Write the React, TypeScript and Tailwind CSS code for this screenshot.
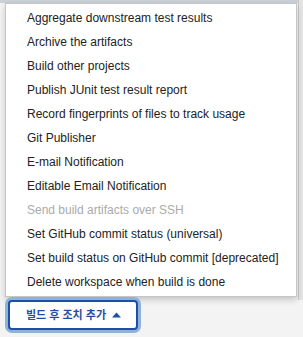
import React from 'react';

const items = [
  { label: 'Aggregate downstream test results' },
  { label: 'Archive the artifacts' },
  { label: 'Build other projects' },
  { label: 'Publish JUnit test result report' },
  { label: 'Record fingerprints of files to track usage' },
  { label: 'Git Publisher' },
  { label: 'E-mail Notification' },
  { label: 'Editable Email Notification' },
  { label: 'Send build artifacts over SSH', disabled: true },
  { label: 'Set GitHub commit status (universal)' },
  { label: 'Set build status on GitHub commit [deprecated]' },
  { label: 'Delete workspace when build is done' },
];

export default function App() {
  return (
    <div
      className="relative w-[303px] h-[337px] overflow-hidden bg-[#f3f3f3] text-[12px] text-[#222]"
      style={{ fontFamily: '"Liberation Sans", Arial, sans-serif' }}
    >
      {/* page content behind the menu */}
      <div className="h-[3px] bg-[#c9d1d8]" />
      <div className="absolute right-0 top-0 h-[300px] w-[5px] bg-[#e4e4e4] border-l border-[#c8c8c8]" />

      <div className="absolute left-[5px] top-[3px] w-[292px] bg-white border border-[#c6c6c6] shadow-[0_3px_6px_rgba(0,0,0,0.18)] py-[2px]">
        {items.map((item, idx) => (
          <div
            key={idx}
            className={
              'h-6 pl-[21px] flex items-center whitespace-nowrap ' +
              (item.disabled ? 'text-[#aaaaaa]' : 'text-[#222]')
            }
          >
            {item.label}
          </div>
        ))}
      </div>

      <div className="absolute left-[8px] top-[300px]">
        <button
          className="h-[30px] pl-[16px] pr-[15px] rounded-[4px] border-2 border-[#1f4ea6] bg-white text-[#1f4ea6] font-bold text-[11px] flex items-center gap-[6px] ring-[3px] ring-[#8fb3d6]"
          style={{ fontFamily: '"Liberation Sans", "Noto Sans CJK KR", sans-serif' }}
        >
          빌드 후 조치 추가
          <svg width="9" height="6" viewBox="0 0 9 6">
            <path d="M0 5.5 L4.5 0.5 L9 5.5 Z" fill="#1f4ea6" />
          </svg>
        </button>
      </div>
    </div>
  );
}
